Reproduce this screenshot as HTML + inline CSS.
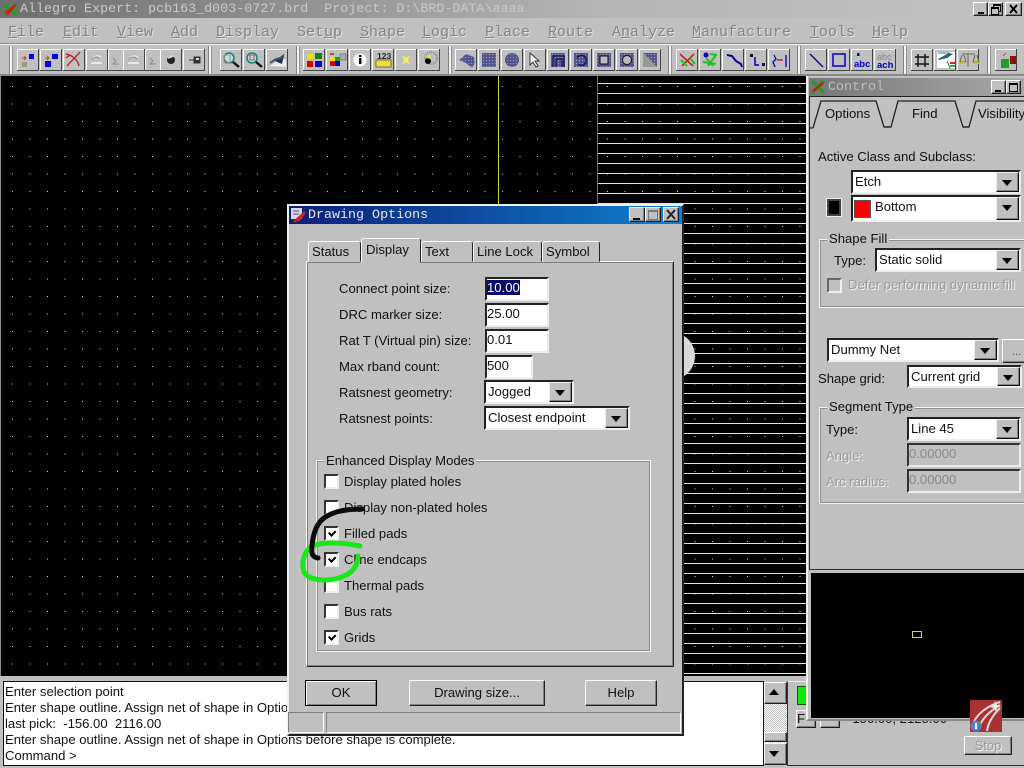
<!DOCTYPE html>
<html><head><meta charset="utf-8"><title>Allegro Expert</title>
<style>
html,body{margin:0;padding:0;width:1024px;height:768px;overflow:hidden;background:#c0c0c0}
body{position:relative;font:13.1px/16px "Liberation Sans",sans-serif;color:#111}
.a,.t,.f,.c,.b,.cb,.g{position:absolute}
.t{white-space:nowrap;line-height:18px;transform:translateY(1px)}
.m{position:absolute;white-space:nowrap;font:15px/18px "Liberation Mono",monospace;color:#858585;text-shadow:1px 1px 0 #e0e0e0;top:24px}
.m u{text-decoration:underline}
.f{background:#fff;box-sizing:border-box;border:2px solid;border-color:#222 #eee #eee #222;padding:1px 0 0 0;white-space:nowrap}
.f.d{background:#c0c0c0;color:#888;border-color:#333 #eee #eee #333}
.c{background:#fff;box-sizing:border-box;border:2px solid;border-color:#222 #eee #eee #222;white-space:nowrap;padding:2px 0 0 2px}
.c i{position:absolute;right:0;top:0;bottom:0;width:23px;box-sizing:border-box;background:#c0c0c0;border:1px solid;border-color:#eee #111 #111 #eee;box-shadow:inset -1px -1px 0 #808080}
.c i:after{content:"";position:absolute;left:5px;top:7px;border:5px solid transparent;border-top:6px solid #000;border-bottom:0}
.b{background:#c0c0c0;box-sizing:border-box;border:1px solid;border-color:#fff #222 #222 #fff;box-shadow:inset -1px -1px 0 #808080;text-align:center;padding-top:4px}
.cb{width:15px;height:15px;box-sizing:border-box;background:#fff;border:2px solid;border-color:#333 #eee #eee #333}
.cb.k:after{content:"";position:absolute;left:2px;top:0;width:5px;height:3px;border:solid #000;border-width:0 0 2px 2px;transform:rotate(-45deg) translate(-1px,2px)}
.g{box-sizing:border-box;border:1px solid #f4f4f4;outline:1px solid #909090;outline-offset:-2px}
.l{position:absolute;background:#c0c0c0;padding:0 2px;white-space:nowrap;line-height:14px}
.dis{color:#9a9a9a;text-shadow:1px 1px 0 #f2f2f2}
.tab{position:absolute;box-sizing:border-box;background:#c0c0c0;border:1px solid;border-color:#fff #222 #c0c0c0 #fff;border-radius:3px 3px 0 0;padding:2px 0 0 3px;white-space:nowrap}
</style></head><body>

<!-- title bar -->
<div class="a" style="left:0;top:0;width:1024px;height:18px;background:linear-gradient(90deg,#6f6f6f,#b6b6b6 60%,#c2c2c2)"></div>
<div class="t" style="left:20px;top:0;font:13.35px/18px 'Liberation Mono',monospace;color:#c8c8c8;white-space:pre">Allegro Expert: pcb163_d003-0727.brd  Project: D:\BRD-DATA\aaaa</div>
<svg class="a" style="left:2px;top:1px" width="18" height="17"><path d="M2 3l13 11M14 3L3 14" stroke="#2a9a2a" stroke-width="4"/><path d="M3 12l11-8M5 14l8-10" stroke="#d01818" stroke-width="2"/></svg>
<div class="b" style="left:973px;top:2px;width:15px;height:14px"></div>
<div class="a" style="left:978px;top:12px;width:6px;height:2px;background:#000"></div>
<div class="b" style="left:988px;top:2px;width:15px;height:14px"></div>
<div class="a" style="left:993px;top:4px;width:6px;height:5px;border:1px solid #000;border-top-width:2px"></div>
<div class="a" style="left:991px;top:7px;width:6px;height:5px;border:1px solid #000;border-top-width:2px;background:#c0c0c0"></div>
<div class="b" style="left:1005px;top:2px;width:17px;height:14px"></div>
<svg class="a" style="left:1005px;top:2px" width="17" height="14"><path d="M5 3l7 8M12 3l-7 8" stroke="#000" stroke-width="2"/></svg>

<!-- menu -->
<div class="m" style="left:8px"><u>F</u>ile</div>
<div class="m" style="left:63px"><u>E</u>dit</div>
<div class="m" style="left:117px"><u>V</u>iew</div>
<div class="m" style="left:171px"><u>A</u>dd</div>
<div class="m" style="left:216px"><u>D</u>isplay</div>
<div class="m" style="left:297px">Set<u>u</u>p</div>
<div class="m" style="left:360px"><u>S</u>hape</div>
<div class="m" style="left:422px"><u>L</u>ogic</div>
<div class="m" style="left:485px"><u>P</u>lace</div>
<div class="m" style="left:548px"><u>R</u>oute</div>
<div class="m" style="left:612px">A<u>n</u>alyze</div>
<div class="m" style="left:692px"><u>M</u>anufacture</div>
<div class="m" style="left:810px"><u>T</u>ools</div>
<div class="m" style="left:872px"><u>H</u>elp</div>
<div class="a" style="left:0;top:43px;width:1024px;height:1px;background:#8a8a8a"></div>
<div class="a" style="left:0;top:44px;width:1024px;height:1px;background:#f0f0f0"></div>

<!-- toolbar -->
<svg class="a" style="left:0;top:44px" width="1024" height="32" viewBox="0 44 1024 32">
<defs><g id="b"><rect width="22" height="21" fill="#c0c0c0"/><rect x="0" y="0" width="22" height="1" fill="#fff"/><rect x="0" y="0" width="1" height="21" fill="#fff"/><rect x="21" y="0" width="1" height="22" fill="#444"/><rect x="0" y="21" width="22" height="1" fill="#444"/></g>
<g id="sep"><rect width="1" height="28" fill="#808080"/><rect x="1" width="2" height="28" fill="#f4f4f4"/><rect x="3" width="1" height="28" fill="#909090"/></g>
<pattern id="dd" width="3" height="3" patternUnits="userSpaceOnUse"><rect width="3" height="3" fill="#55558f"/><rect width="1" height="1" fill="#9c9cb8"/></pattern></defs>
<use href="#sep" x="9" y="46"/><use href="#sep" x="208" y="46"/><use href="#sep" x="296" y="46"/><use href="#sep" x="448" y="46"/><use href="#sep" x="668" y="46"/><use href="#sep" x="797" y="46"/><use href="#sep" x="903" y="46"/><use href="#sep" x="987" y="46"/>
<rect y="74" width="1024" height="2" fill="#888"/>
<!-- group 1 -->
<use href="#b" x="17" y="49"/><rect x="29" y="54" width="5" height="5" fill="#0000e0"/><path d="M22 58h4M24 56l2 2-2 2" stroke="#c05020" fill="none"/><rect x="22" y="62" width="5" height="5" fill="#9a9a80"/>
<use href="#b" x="40" y="49"/><rect x="52" y="54" width="6" height="5" fill="#0000e0"/><rect x="45" y="61" width="6" height="6" fill="#0000e0"/><path d="M45 58h4M47 56l2 2-2 2" stroke="#c05020" fill="none"/>
<use href="#b" x="63" y="49"/><path d="M66 54c6 1 12 6 13 12M80 52c-4 5-9 9-13 14M66 58l4-3" stroke="#c02020" fill="none" stroke-width="1.4"/>
<use href="#b" x="86" y="49"/><use href="#b" x="108" y="49"/>
<path d="M91 63h11M93 59c1-3 6-4 8-1" stroke="#e8e8e8" fill="none" stroke-width="2"/><path d="M92 60c1-3 6-4 8-1M113 58l3 3-3 3h6" stroke="#8a8a8a" fill="none"/>
<use href="#b" x="123" y="49"/><use href="#b" x="145" y="49"/>
<path d="M128 63h11M130 59c1-3 6-4 8-1" stroke="#e8e8e8" fill="none" stroke-width="2"/><path d="M129 60c1-3 6-4 8-1M150 58l3 3-3 3h6" stroke="#8a8a8a" fill="none"/>
<use href="#b" x="160" y="49"/><circle cx="171" cy="60" r="4" fill="#222"/><path d="M168 58l5-2" stroke="#ddd" stroke-width="2"/>
<use href="#b" x="183" y="49"/><path d="M189 60h5M194 57h6v6h-6z" stroke="#333" fill="#333"/><rect x="196" y="58" width="3" height="2" fill="#ccc"/>
<!-- group 2 -->
<use href="#b" x="220" y="49"/><circle cx="229" cy="58" r="5" fill="#b0e8e0" stroke="#108080" stroke-width="1.5"/><path d="M233 62l6 5" stroke="#111" stroke-width="2.4"/><rect x="224" y="55" width="6" height="8" fill="none" stroke="#d08080"/>
<use href="#b" x="243" y="49"/><circle cx="252" cy="58" r="5" fill="#b0e8e0" stroke="#108080" stroke-width="1.5"/><path d="M256 62l6 5" stroke="#111" stroke-width="2.4"/><rect x="250" y="55" width="4" height="5" fill="none" stroke="#d04040"/>
<use href="#b" x="266" y="49"/><path d="M270 66l8-6 8-1v8z" fill="#eee"/><path d="M275 61l9-7-2 10z" fill="#1a2a70"/><path d="M270 63l6-4 8-2" stroke="#555" fill="none" stroke-width="2"/>
<!-- group 3 -->
<use href="#b" x="303" y="49"/><rect x="307" y="54" width="6" height="5" fill="#e8e800"/><rect x="315" y="53" width="7" height="6" fill="#108010"/><rect x="307" y="61" width="6" height="6" fill="#e00000"/><rect x="315" y="61" width="7" height="6" fill="#0000c0"/>
<use href="#b" x="326" y="49"/><rect x="330" y="57" width="5" height="4" fill="#e8e800"/><rect x="335" y="57" width="5" height="4" fill="#10a010"/><rect x="330" y="61" width="5" height="5" fill="#e00000"/><rect x="335" y="61" width="5" height="5" fill="#0000c0"/><rect x="340" y="54" width="6" height="6" fill="#aaa" stroke="#888"/><path d="M330 54h4" stroke="#c04040" stroke-width="2"/>
<use href="#b" x="349" y="49"/><circle cx="360" cy="60" r="6.5" fill="#fff"/><rect x="359" y="55" width="2.4" height="2" fill="#000"/><rect x="359" y="58" width="2.4" height="6" fill="#000"/>
<use href="#b" x="372" y="49"/><rect x="376" y="60" width="15" height="7" fill="#e8e040" stroke="#444" stroke-width=".7"/><text x="377" y="59" font-family="Liberation Sans,sans-serif" font-size="8.5" font-weight="700" fill="#222">123</text>
<use href="#b" x="395" y="49"/><path d="M402 55l4 3 4-3-2 5 2 5-4-3-4 3 2-5z" fill="#f0f050"/>
<use href="#b" x="418" y="49"/><circle cx="431" cy="58" r="6" fill="none" stroke="#888" stroke-dasharray="1 1" stroke-width="2"/><circle cx="428" cy="61" r="3" fill="#000"/><path d="M425 56l5-1 1 3-2 1z" fill="#e8e040"/>
<!-- group 4 -->
<use href="#b" x="455" y="49"/><path d="M459 60l7-6 8 3 1 6-3 5-6-5z" fill="url(#dd)"/>
<use href="#b" x="478" y="49"/><rect x="482" y="53" width="14" height="14" fill="url(#dd)"/>
<use href="#b" x="501" y="49"/><circle cx="512" cy="60" r="7" fill="url(#dd)"/>
<use href="#b" x="524" y="49"/><path d="M530 53v12l3-3 3 5 2-1-3-5h4z" fill="#fff" stroke="#333"/>
<use href="#b" x="547" y="49"/><rect x="551" y="53" width="14" height="14" fill="url(#dd)"/><path d="M553 67v-11h11v11M556 67v-8h6v8" fill="none" stroke="#1a1a5a" stroke-width="1.4"/>
<use href="#b" x="570" y="49"/><rect x="574" y="53" width="14" height="14" fill="url(#dd)"/><path d="M577 58a5 5 0 1 1 1 6" fill="none" stroke="#1a1a5a" stroke-width="1.6"/>
<use href="#b" x="593" y="49"/><rect x="597" y="53" width="14" height="14" fill="url(#dd)"/><rect x="600" y="56" width="8" height="8" fill="#bbb" stroke="#111"/>
<use href="#b" x="616" y="49"/><rect x="620" y="53" width="14" height="14" fill="url(#dd)"/><circle cx="627" cy="60" r="4.5" fill="#bbb" stroke="#111"/>
<use href="#b" x="639" y="49"/><path d="M643 53h14v14z" fill="url(#dd)"/><path d="M643 53v14h14z" fill="#999"/>
<!-- group 5 -->
<use href="#b" x="676" y="49"/><path d="M680 54l13 12M694 54L682 66" stroke="#d02020" stroke-width="1.6"/><path d="M681 60l6 6M690 58l5 6" stroke="#20c020" stroke-width="2"/>
<use href="#b" x="699" y="49"/><circle cx="706" cy="55" r="2.5" fill="#0000c0"/><path d="M706 58l7 8M716 55l-8 11M703 62l13 2M710 54l7 1" stroke="#20c020" stroke-width="2" fill="none"/>
<use href="#b" x="722" y="49"/><path d="M727 55l5 1 4 5 5 3 1 3" fill="none" stroke="#0000a0" stroke-width="2"/>
<use href="#b" x="745" y="49"/><rect x="750" y="54" width="3" height="3" fill="#111"/><path d="M755 57v8h4" stroke="#0000c0" fill="none" stroke-width="1.5"/><rect x="762" y="63" width="3" height="3" fill="#111"/>
<use href="#b" x="768" y="49"/><path d="M774 55l2 4-3 3 2 5M786 55v12" stroke="#0000c0" fill="none" stroke-width="1.3"/><path d="M777 60h6" stroke="#d02020" stroke-width="1.5"/>
<!-- group 6 -->
<use href="#b" x="805" y="49"/><path d="M810 54l13 13" stroke="#0a0a80" stroke-width="1.4"/>
<use href="#b" x="828" y="49"/><rect x="833" y="54" width="12" height="12" fill="none" stroke="#1010c0" stroke-width="1.6"/>
<use href="#b" x="851" y="49"/><text x="854" y="67" font-family="Liberation Sans,sans-serif" font-size="9.5" font-weight="700" fill="#0000c0">abc</text><rect x="857" y="53" width="2.5" height="3" fill="#0000c0"/>
<use href="#b" x="874" y="49"/><text x="877" y="60" font-family="Liberation Sans,sans-serif" font-size="9" fill="#888">abc</text><text x="877" y="68" font-family="Liberation Sans,sans-serif" font-size="9.5" font-weight="700" fill="#0000c0">ach</text>
<!-- group 7 -->
<use href="#b" x="911" y="49"/><path d="M918 54v13M925 54v13M915 57h14M915 64h14" stroke="#111" stroke-width="1.4"/>
<use href="#b" x="934" y="49"/><rect x="937" y="52" width="18" height="16" fill="#fff"/><path d="M938 59l11-6 4 1-6 4-8 2z" fill="#306070"/><path d="M947 61l3 7M938 53h12" stroke="#208080"/><rect x="950" y="62" width="5" height="2" fill="#e02020"/><rect x="950" y="65" width="5" height="2" fill="#20c020"/>
<use href="#b" x="957" y="49"/><path d="M962 54h13M968 53v14M962 55l-2 7h6l-2-7M975 55l-2 7h6l-2-7" fill="none" stroke="#666"/><path d="M960 63h6M973 63h6" stroke="#c8c020" stroke-width="2"/>
<!-- group 8 -->
<use href="#b" x="995" y="49"/><rect x="1001" y="59" width="8" height="9" fill="#20a020"/><rect x="1010" y="56" width="6" height="8" fill="#901010"/><path d="M1003 56l3-3" stroke="#c04040"/>
</svg>

<!-- canvas -->
<svg class="a" style="left:0;top:76px" width="807" height="600">
<defs>
<pattern id="dots" width="17.5" height="17.5" patternUnits="userSpaceOnUse" x="12" y="10"><rect width="1" height="1" fill="#d8d8d8"/></pattern>
<pattern id="lines" width="10" height="10" patternUnits="userSpaceOnUse" y="7"><rect width="10" height="1" fill="#e4e4e4"/></pattern>
</defs>
<rect width="807" height="600" fill="#000"/>
<rect width="807" height="600" fill="url(#dots)"/>
<rect x="597" width="210" height="600" fill="url(#lines)"/>
<rect x="597" width="1" height="600" fill="#777"/>
<rect x="498" width="1" height="130" fill="#d8d020"/>
<circle cx="671" cy="280" r="24" fill="#d8d8d8"/>
</svg>
<div class="a" style="left:0;top:76px;width:1px;height:600px;background:#888"></div>

<!-- bottom area -->
<div class="a" style="left:3px;top:681px;width:761px;height:85px;box-sizing:border-box;background:#fff;border:1px solid #111;overflow:hidden;padding:2px 0 0 1px;line-height:16px;white-space:nowrap">Enter selection point<br>Enter shape outline. Assign net of shape in Options before shape is complete.<br>last pick:&nbsp; -156.00&nbsp; 2116.00<br>Enter shape outline. Assign net of shape in Options before shape is complete.<br>Command &gt;</div>
<div class="a" style="left:764px;top:682px;width:23px;height:83px;background:repeating-conic-gradient(#fff 0 25%,#c0c0c0 0 50%) 0 0/2px 2px"></div>
<div class="b" style="left:764px;top:682px;width:23px;height:22px"></div>
<div class="a" style="left:769px;top:689px;border:5px solid transparent;border-bottom:6px solid #000;border-top:0"></div>
<div class="b" style="left:764px;top:732px;width:23px;height:10px"></div>
<div class="b" style="left:764px;top:743px;width:23px;height:22px"></div>
<div class="a" style="left:769px;top:751px;border:5px solid transparent;border-top:6px solid #000;border-bottom:0"></div>
<div class="a" style="left:787px;top:681px;width:237px;height:85px;box-sizing:border-box;border-left:1px solid #333;border-top:1px solid #eee;border-bottom:1px solid #333"></div>
<div class="a" style="left:797px;top:686px;width:10px;height:17px;background:#10e810;border:1px solid #060"></div>
<div class="b" style="left:796px;top:710px;width:20px;height:18px;padding:0;text-align:left">F</div>
<div class="b" style="left:820px;top:710px;width:20px;height:18px"></div>
<div class="t" style="left:848px;top:709px;color:#111">-156.00, 2128.00</div>
<div class="b dis" style="left:964px;top:736px;width:48px;height:19px;padding-top:1px">Stop</div>

<!-- control panel -->
<div class="a" style="left:806px;top:76px;width:218px;height:645px;background:#c0c0c0;border-left:2px solid #f2f2f2;border-bottom:2px solid #888;box-sizing:border-box"></div>
<div class="a" style="left:809px;top:78px;width:215px;height:18px;background:linear-gradient(90deg,#777,#a8a8a8)"></div>
<div class="t" style="left:828px;top:78px;font:13.35px/18px 'Liberation Mono',monospace;color:#bdbdbd">Control</div>
<svg class="a" style="left:810px;top:79px" width="16" height="16"><path d="M2 2l12 12M14 2L2 14" stroke="#2a9a2a" stroke-width="3.5"/><path d="M3 12L13 4" stroke="#d01818" stroke-width="2.4"/></svg>
<div class="b" style="left:991px;top:80px;width:15px;height:14px"></div>
<div class="a" style="left:995px;top:90px;width:6px;height:2px;background:#000"></div>
<div class="b" style="left:1006px;top:80px;width:15px;height:14px"></div>
<div class="a" style="left:1009px;top:83px;width:7px;height:6px;border:1px solid #000;border-top-width:2px"></div>
<div class="a" style="left:809px;top:96px;width:215px;height:1px;background:#222"></div>
<div class="a" style="left:809px;top:96px;width:1px;height:474px;background:#222"></div>
<div class="a" style="left:810px;top:569px;width:214px;height:1px;background:#333"></div>
<svg class="a" style="left:810px;top:98px" width="214" height="32"><path d="M3 30L11 3H66L74 29H81L88 3H145L153 29H159L166 3H214" fill="none" stroke="#222" stroke-width="1.3"/><path d="M74 29H81M153 29H159M0 30H3" stroke="#222" stroke-width="1.3"/></svg>
<div class="t" style="left:825px;top:104px">Options</div>
<div class="t" style="left:912px;top:104px">Find</div>
<div class="t" style="left:978px;top:104px">Visibility</div>
<div class="t" style="left:818px;top:147px">Active Class and Subclass:</div>
<div class="c" style="left:851px;top:170px;width:170px;height:24px">Etch<i></i></div>
<div class="a" style="left:827px;top:199px;width:14px;height:17px;box-sizing:border-box;background:#000;border:2px solid #444;outline:1px solid #eee"></div>
<div class="c" style="left:851px;top:195px;width:170px;height:27px;padding:2px 0 0 22px">Bottom<i></i></div>
<div class="a" style="left:855px;top:201px;width:15px;height:16px;background:#f00;outline:1px solid #555"></div>
<div class="g" style="left:819px;top:239px;width:220px;height:69px"></div>
<div class="l" style="left:827px;top:232px">Shape Fill</div>
<div class="t" style="left:834px;top:251px">Type:</div>
<div class="c" style="left:875px;top:248px;width:146px;height:24px">Static solid<i></i></div>
<div class="cb" style="left:827px;top:278px;background:#c0c0c0;border-color:#666 #eee #eee #666"></div>
<div class="t dis" style="left:848px;top:275px">Defer performing dynamic fill</div>
<div class="c" style="left:827px;top:338px;width:172px;height:24px">Dummy Net<i></i></div>
<div class="b" style="left:1002px;top:339px;width:30px;height:24px;text-align:left;padding-left:9px;font-size:11px;color:#555">...</div>
<div class="t" style="left:818px;top:369px">Shape grid:</div>
<div class="c" style="left:907px;top:365px;width:115px;height:23px">Current grid<i></i></div>
<div class="g" style="left:819px;top:407px;width:220px;height:97px"></div>
<div class="l" style="left:827px;top:400px">Segment Type</div>
<div class="t" style="left:826px;top:420px">Type:</div>
<div class="c" style="left:907px;top:417px;width:114px;height:24px">Line 45<i></i></div>
<div class="t dis" style="left:826px;top:446px">Angle:</div>
<div class="f d" style="left:907px;top:443px;width:114px;height:24px">0.00000</div>
<div class="t dis" style="left:826px;top:472px">Arc radius:</div>
<div class="f d" style="left:907px;top:469px;width:114px;height:24px">0.00000</div>
<!-- minimap -->
<div class="a" style="left:811px;top:573px;width:213px;height:145px;background:#000"></div>
<div class="a" style="left:912px;top:631px;width:8px;height:5px;border:1px solid #d8d060"></div>
<!-- logo -->
<svg class="a" style="left:970px;top:700px" width="33" height="33"><rect width="32" height="32" fill="#a83232"/><path d="M2 27C5 14 18 6 30 2M8 30C11 19 20 11 30 5M17 31C18 23 23 15 30 8" fill="none" stroke="#e0d8d8" stroke-width="2"/><path d="M25 1l2 4 4 1-4 2-1 4-2-4-4-1 4-2z" fill="#eee"/><circle cx="6" cy="26" r="5.5" fill="#5080c8"/><rect x="5" y="23" width="2" height="6" fill="#fff"/></svg>

<!-- dialog -->
<div class="a" style="left:287px;top:204px;width:397px;height:532px;box-sizing:border-box;background:#c0c0c0;border:2px solid;border-color:#f0f0f0 #222 #222 #f0f0f0"></div>
<div class="a" style="left:289px;top:206px;width:393px;height:18px;background:linear-gradient(90deg,#0a1f78,#1080d0)"></div>
<div class="t" style="left:308px;top:206px;font:13.35px/18px 'Liberation Mono',monospace;color:#e8e8e8">Drawing Options</div>
<svg class="a" style="left:290px;top:207px" width="17" height="16"><rect x="1" y="1" width="11" height="11" fill="#d8d8e8"/><path d="M3 4h6M3 7h6" stroke="#5050a0"/><path d="M4 15L15 5M8 14l6-7" stroke="#d02020" stroke-width="2.4"/></svg>
<div class="b" style="left:629px;top:207px;width:16px;height:15px"></div>
<div class="a" style="left:633px;top:218px;width:7px;height:2px;background:#000"></div>
<div class="b" style="left:645px;top:207px;width:16px;height:15px"></div>
<div class="a" style="left:648px;top:210px;width:8px;height:7px;border:1px solid #777;border-top-width:2px"></div>
<div class="b" style="left:663px;top:207px;width:16px;height:15px"></div>
<svg class="a" style="left:663px;top:207px" width="16" height="15"><path d="M4 3l8 9M12 3l-8 9" stroke="#222" stroke-width="2"/></svg>

<!-- tab page -->
<div class="a" style="left:306px;top:261px;width:368px;height:406px;box-sizing:border-box;border:1px solid;border-color:#fff #222 #222 #fff;outline:1px solid #808080;outline-offset:-2px"></div>
<div class="tab" style="left:308px;top:241px;width:53px;height:21px">Status</div>
<div class="tab" style="left:421px;top:241px;width:52px;height:21px">Text</div>
<div class="tab" style="left:473px;top:241px;width:69px;height:21px">Line Lock</div>
<div class="tab" style="left:542px;top:241px;width:58px;height:21px">Symbol</div>
<div class="tab" style="left:361px;top:238px;width:60px;height:25px;padding:3px 0 0 4px">Display</div>

<div class="t" style="left:339px;top:279px">Connect point size:</div>
<div class="t" style="left:339px;top:305px">DRC marker size:</div>
<div class="t" style="left:339px;top:331px">Rat T (Virtual pin) size:</div>
<div class="t" style="left:339px;top:357px">Max rband count:</div>
<div class="t" style="left:339px;top:383px">Ratsnest geometry:</div>
<div class="t" style="left:339px;top:409px">Ratsnest points:</div>
<div class="f" style="left:485px;top:277px;width:64px;height:24px"><span style="background:#0a0a6a;color:#fff">10.00</span></div>
<div class="f" style="left:485px;top:303px;width:64px;height:24px">25.00</div>
<div class="f" style="left:485px;top:329px;width:64px;height:24px">0.01</div>
<div class="f" style="left:485px;top:355px;width:48px;height:24px">500</div>
<div class="c" style="left:484px;top:380px;width:90px;height:24px">Jogged<i></i></div>
<div class="c" style="left:484px;top:406px;width:146px;height:24px">Closest endpoint<i></i></div>

<div class="g" style="left:316px;top:460px;width:335px;height:192px"></div>
<div class="l" style="left:324px;top:454px">Enhanced Display Modes</div>
<div class="cb" style="left:324px;top:474px"></div><div class="t" style="left:344px;top:472px">Display plated holes</div>
<div class="cb" style="left:324px;top:500px"></div><div class="t" style="left:344px;top:498px">Display non-plated holes</div>
<div class="cb k" style="left:324px;top:526px"></div><div class="t" style="left:344px;top:524px">Filled pads</div>
<div class="cb k" style="left:324px;top:552px"></div><div class="t" style="left:344px;top:550px">Cline endcaps</div>
<div class="cb" style="left:324px;top:578px"></div><div class="t" style="left:344px;top:576px">Thermal pads</div>
<div class="cb" style="left:324px;top:604px"></div><div class="t" style="left:344px;top:602px">Bus rats</div>
<div class="cb k" style="left:324px;top:630px"></div><div class="t" style="left:344px;top:628px">Grids</div>

<div class="b" style="left:305px;top:680px;width:72px;height:26px;border-color:#000;box-shadow:inset 1px 1px 0 #fff,inset -1px -1px 0 #808080">OK</div>
<div class="b" style="left:409px;top:680px;width:136px;height:26px">Drawing size...</div>
<div class="b" style="left:585px;top:680px;width:72px;height:26px">Help</div>
<div class="a" style="left:288px;top:712px;width:36px;height:21px;box-sizing:border-box;border:1px solid;border-color:#808080 #fff #fff #808080"></div>
<div class="a" style="left:326px;top:712px;width:355px;height:21px;box-sizing:border-box;border:1px solid;border-color:#808080 #fff #fff #808080"></div>

<!-- annotations -->
<svg class="a" style="left:0;top:0;pointer-events:none" width="1024" height="768">
<path d="M360 546C345 543 325 541 312 546C304 551 301 563 304 572C309 581 328 582 342 577C352 573 358 566 358 556" fill="none" stroke="#18e818" stroke-width="5" stroke-linecap="round"/>
<path d="M362 509C345 509 332 512 324 518C316 524 313 534 312 546C311 553 312 557 318 558" fill="none" stroke="#0a0a0a" stroke-width="5" stroke-linecap="round"/>
</svg>
</body></html>
